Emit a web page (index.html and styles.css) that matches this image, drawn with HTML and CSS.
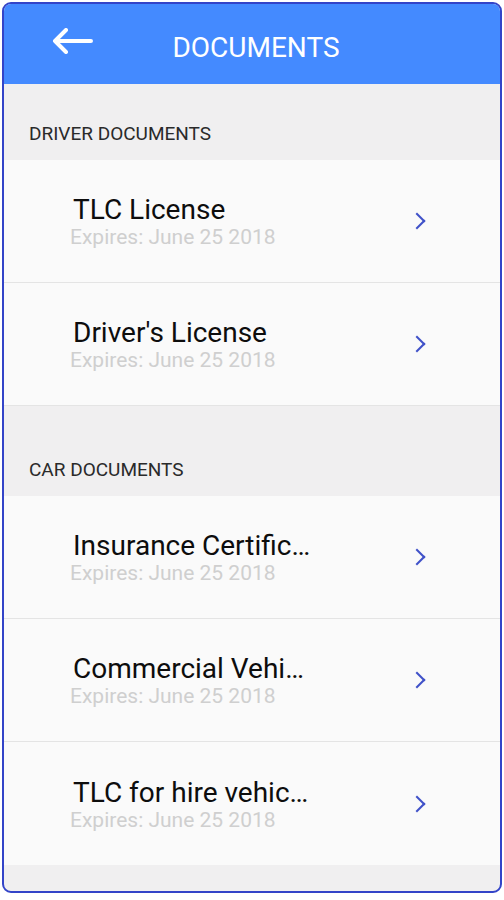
FILE: index.html
```html
<!DOCTYPE html>
<html lang="en">
<head>
  <meta charset="UTF-8" />
  <meta name="viewport" content="width=device-width, initial-scale=1.0" />
  <title>Documents</title>
  <link rel="stylesheet" href="styles.css">
</head>
<body>
  <div class="frame">
    <header class="topbar">
      <svg class="back" width="42" height="26" viewBox="0 0 42 26">
        <path d="M40 13H4M15 2L4 13l11 11" fill="none" stroke="#fff" stroke-width="4" stroke-linecap="round" stroke-linejoin="round"/>
      </svg>
      <h1>DOCUMENTS</h1>
    </header>

    <div class="section first">DRIVER DOCUMENTS</div>
    <div class="item">
      <div class="text">
        <div class="title">TLC License</div>
        <div class="sub">Expires: June 25 2018</div>
      </div>
      <span class="chev"></span>
    </div>
    <div class="item">
      <div class="text">
        <div class="title">Driver's License</div>
        <div class="sub">Expires: June 25 2018</div>
      </div>
      <span class="chev"></span>
    </div>

    <div class="section">CAR DOCUMENTS</div>
    <div class="item">
      <div class="text">
        <div class="title">Insurance Certific…</div>
        <div class="sub">Expires: June 25 2018</div>
      </div>
      <span class="chev"></span>
    </div>
    <div class="item">
      <div class="text">
        <div class="title">Commercial Vehi…</div>
        <div class="sub">Expires: June 25 2018</div>
      </div>
      <span class="chev"></span>
    </div>
    <div class="item">
      <div class="text">
        <div class="title">TLC for hire vehic…</div>
        <div class="sub">Expires: June 25 2018</div>
      </div>
      <span class="chev"></span>
    </div>
    <div class="bottom"></div>
  </div>
</body>
</html>
```

FILE: styles.css
```css
html, body {
  margin: 0;
  background-color: #ffffff;
}
body {
  font-family: Roboto, "Noto Sans", sans-serif;
  padding: 2px 2px 3px 2px;
}
.frame {
  border: 2px solid #3344c8;
  border-radius: 9px;
  overflow: hidden;
  background-color: #f0eff0;
  height: 891px;
  box-sizing: border-box;
}
.topbar {
  height: 80px;
  background-color: #448aff;
  display: flex;
  align-items: center;
  justify-content: center;
  position: relative;
}
.back {
  position: absolute;
  left: 47px;
  top: 24px;
}
.topbar h1 {
  margin: 0;
  color: #fff;
  font-weight: 400;
  font-size: 28px;
  padding-top: 6px;
  padding-left: 8px;
}
.section {
  height: 90px;
  box-sizing: border-box;
  padding: 0 0 15px 25px;
  display: flex;
  align-items: flex-end;
  font-size: 19px;
  color: #2a2a2a;
}
.section.first {
  height: 76px;
}
.item {
  height: 123px;
  background-color: #fafafa;
  border-bottom: 1px solid #e4e4e4;
  box-sizing: border-box;
  display: flex;
  align-items: center;
  padding: 0 77px 0 66px;
}
.section + .item + .item + .item, .item:nth-last-child(2) {
  border-bottom: none;
}
.text {
  flex: 1;
  min-width: 0;
  margin-top: 2px;
}
.title {
  font-size: 28px;
  color: #0d0d0d;
  white-space: nowrap;
  padding-left: 3px;
  line-height: 30px;
}
.sub {
  font-size: 21px;
  color: #cfcfcf;
  line-height: 24px;
}
.chev {
  width: 10px;
  height: 10px;
  border-top: 2.5px solid #3f51c8;
  border-right: 2.5px solid #3f51c8;
  transform: rotate(45deg);
}
```
